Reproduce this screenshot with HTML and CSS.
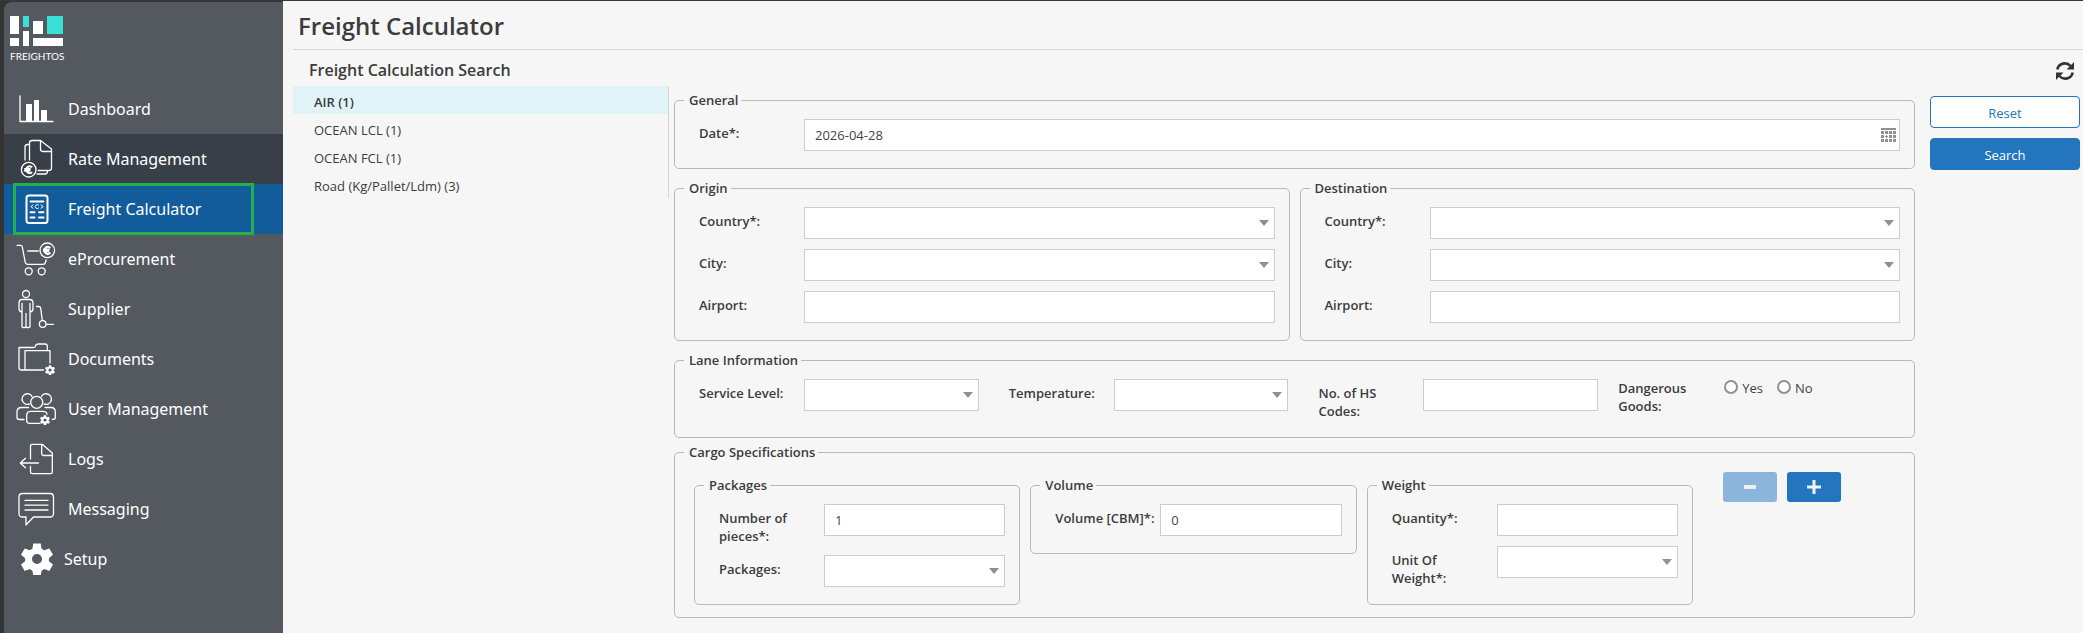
FILE: index.html
```html
<!DOCTYPE html>
<html lang="en">
<head>
    <meta charset="UTF-8">
    <meta name="viewport" content="width=device-width, initial-scale=1.0">
    <title>Freight Calculator</title>
    <link rel="stylesheet" href="styles.css">
</head>
<body>

    <nav class="sidebar">
        <a class="brand" href="#">
            <svg width="54" height="30" viewBox="0 0 54 30">
                <path fill="#fff" d="M0 0h9v18H0zM0 22h9v8H0zM13 15h6v15h-6zM23 5h10v13H23zM23 22h30v8H23z"/>
                <path fill="#3adfd5" d="M13 0h6v11h-6zM37 0h16v18H37z"/>
            </svg>
            <span>FREIGHTOS</span>
        </a>
        <ul class="menu">
            <li><a href="#">
                <svg class="icon" viewBox="0 0 44 44"><path d="M6 9v25.500h33"/><path class="solid" d="M12 17h6v17h-6zM20 13h5v21h-5zM27 23h6v11h-6z"/></svg>
                Dashboard</a></li>
            <li class="open"><a href="#">
                <svg class="icon" viewBox="0 0 44 44">
                    <path d="M15.500 23V6q0-2.500 2.500-2.500h8.500L37.500 12v19q0 2.500-2.500 2.500H24M26.500 3.500V12q0 2.500 2.500 2.500h8"/>
                    <path d="M15 7.500h-1.500q-2.500 0-2.500 2.500v13M23 37h8q2.500 0 2.500-3"/>
                    <circle cx="14.700" cy="32.700" r="7.300"/>
                    <path class="bold" d="M17.500 29.800a3.400 3.400 0 1 0 0 5.800M11 32h5M11 33.700h4.500"/>
                </svg>
                Rate Management</a></li>
            <li class="current"><a href="#">
                <svg class="icon" viewBox="0 0 44 44">
                    <rect class="bold" x="12.500" y="8.500" width="21" height="27.500" rx="2.500"/>
                    <path class="bold" d="M16.500 14.500h13M16.500 25.300h4M25 25.300h4.500M16.500 30.500h4M25 30.500h4.500"/>
                    <path class="thin" d="M19 18l-2.200 1.600 2.200 1.600M27 18l2.200 1.600-2.200 1.600M24.500 18a2 2 0 1 0 0 3.200"/>
                </svg>
                Freight Calculator</a></li>
            <li><a href="#">
                <svg class="icon" viewBox="0 0 44 44">
                    <path d="M3 8.300h3.500q1.500 0 1.800 1.700l2.900 15q.4 2.300 2.500 2.300H29q2 0 2.500-1.800l.6-2.500M13.700 14h10.500"/>
                    <circle cx="33.300" cy="13.300" r="7.300"/><circle cx="14.700" cy="34.300" r="3.500"/><circle cx="27.700" cy="34.300" r="3.500"/>
                    <path class="bold" d="M35.700 10.500a3.400 3.400 0 1 0 0 5.600M29.800 12.600h5M29.800 14.300h4.500"/>
                </svg>
                eProcurement</a></li>
            <li><a href="#">
                <svg class="icon" viewBox="0 0 44 44">
                    <circle cx="12" cy="7" r="3.500"/>
                    <path d="M8 25q-3-.5-3-3v-6q0-3.500 3.500-3.500h7q3.500 0 3.500 3.500v6q0 2.500-3 3M8 16.500V39q0 1.700 2 1.700t2-1.700V26.500V39q0 1.700 2 1.700t2-1.700V16.500"/>
                    <path d="M22.500 19.500h2.300q1.600 0 1.900 1.600l1.600 12.400M32.500 37.300h7"/><circle cx="28.700" cy="37" r="3.300"/>
                </svg>
                Supplier</a></li>
            <li><a href="#">
                <svg class="icon" viewBox="0 0 44 44">
                    <path d="M11 33H7.500Q5 33 5 30.500v-20h14.500q2 0 2-1.500t2.500-2h7q2.300 0 2.300 2.500v4M11 33V13.700h25V26M11 33h18.500"/>
                    <use href="#gear" x="31" y="28" width="10" height="10"/>
                </svg>
                Documents</a></li>
            <li><a href="#">
                <svg class="icon" viewBox="0 0 44 44">
                    <path d="M15.500 16.900A5.300 5.300 0 1 1 18 9.500M27.500 9.500A5.300 5.300 0 1 1 30 16.900"/>
                    <circle cx="22.700" cy="15.300" r="6"/>
                    <path d="M14.500 20.500H7.500Q3 20.500 3 25v5.500q0 2 2.500 2h4.500M31 20.500h6q4.300 0 4.300 4.500v5.500q0 2-3 2M26 36.300H15.500q-2.800 0-2.800-2.500v-5.500q0-4 4-4h12q4 0 4.300 3"/>
                    <use href="#gear" x="26" y="28" width="10" height="10"/>
                </svg>
                User Management</a></li>
            <li><a href="#">
                <svg class="icon" viewBox="0 0 44 44">
                    <path d="M16.500 22V9q0-1.700 1.700-1.700h10L38.300 16v19q0 1.700-1.700 1.700H18.200q-1.700 0-1.700-1.700v-5.500M27.700 7.500v9.300q0 1.700 1.700 1.700h8.800"/>
                    <path d="M24.500 26H6.500M11.500 21.300L6.300 26l5.200 4.700"/>
                </svg>
                Logs</a></li>
            <li><a href="#">
                <svg class="icon" viewBox="0 0 44 44">
                    <path d="M8.500 6.500h27.500q3.500 0 3.500 3.500v16.500q0 3.500-3.500 3.500H19.500L12 38v-8H8.500Q5 30 5 26.500V10q0-3.500 3.500-3.500zM11 13.400h23M11 18.200h23M11 23h23"/>
                </svg>
                Messaging</a></li>
            <li class="setup"><a href="#">
                <svg class="icon" viewBox="0 0 44 44"><use href="#gear" x="7" y="6" width="32" height="32"/></svg>
                Setup</a></li>
        </ul>
        <svg class="defs">
            <symbol id="gear" viewBox="0 0 32 32">
                <path class="solid" fill-rule="evenodd" d="M12.300 0.500h7.400l.9 5.200 2.700 1.600 5-1.900 3.700 6.400-4.100 3.400v3l4.100 3.400-3.700 6.400-5-1.900-2.700 1.600-.9 4.800h-7.400l-.9-4.800-2.700-1.600-5 1.900L0 21.600l4.100-3.400v-3L0 11.800l3.700-6.400 5 1.900 2.700-1.600zM16 11a5 5 0 1 0 0 10 5 5 0 1 0 0-10z"/>
            </symbol>
        </svg>
    </nav>

    <main class="page">
        <header class="page-header">
            <h1>Freight Calculator</h1>
        </header>
        <div class="title-row">
            <h2>Freight Calculation Search</h2>
            <button class="refresh" type="button" aria-label="Refresh">
                <svg width="20" height="20" viewBox="0 0 20 20">
                    <path fill="none" stroke="#333" stroke-width="2.600" d="M2.300 8.500A7.600 7.600 0 0 1 15.500 5M17.700 11.500A7.600 7.600 0 0 1 4.500 15"/>
                    <path fill="#333" d="M19 1v7.500h-7.500l2.500-2.400 2.600-2.600zM1 19v-7.500h7.500L6 13.900l-2.600 2.600z"/>
                </svg>
            </button>
        </div>

        <div class="content">
            <ul class="modes">
                <li><a class="selected" href="#">AIR (1)</a></li>
                <li><a href="#">OCEAN LCL (1)</a></li>
                <li><a href="#">OCEAN FCL (1)</a></li>
                <li><a href="#">Road (Kg/Pallet/Ldm) (3)</a></li>
            </ul>

            <form class="search-form" id="search-form">
                <fieldset>
                    <legend>General</legend>
                    <div class="field">
                        <label for="date">Date*:</label>
                        <div class="control">
                            <input type="text" id="date" value="2026-04-28">
                            <svg class="calendar" width="15" height="14" viewBox="0 0 15 14">
                                <path fill="#8e9096" d="M0 0h15v2H0zM0 3h3v3H0zM4 3h3v3H4zM8 3h3v3H8zM12 3h3v3h-3zM0 7h3v3H0zM5 7h1v1h1v1H6v1H5V9H4V8h1zM8 7h3v3H8zM12 7h3v3h-3zM0 11h3v3H0zM4 11h3v3H4zM8 11h3v3H8zM12 11h3v3h-3z"/>
                            </svg>
                        </div>
                    </div>
                </fieldset>

                <div class="places">
                    <fieldset>
                        <legend>Origin</legend>
                        <div class="field">
                            <label for="origin-country">Country*:</label>
                            <div class="control drop"><select id="origin-country"></select></div>
                        </div>
                        <div class="field">
                            <label for="origin-city">City:</label>
                            <div class="control drop"><select id="origin-city"></select></div>
                        </div>
                        <div class="field">
                            <label for="origin-airport">Airport:</label>
                            <div class="control"><input type="text" id="origin-airport"></div>
                        </div>
                    </fieldset>
                    <fieldset>
                        <legend>Destination</legend>
                        <div class="field">
                            <label for="dest-country">Country*:</label>
                            <div class="control drop"><select id="dest-country"></select></div>
                        </div>
                        <div class="field">
                            <label for="dest-city">City:</label>
                            <div class="control drop"><select id="dest-city"></select></div>
                        </div>
                        <div class="field">
                            <label for="dest-airport">Airport:</label>
                            <div class="control"><input type="text" id="dest-airport"></div>
                        </div>
                    </fieldset>
                </div>

                <fieldset>
                    <legend>Lane Information</legend>
                    <div class="lane">
                        <div class="field">
                            <label for="service">Service Level:</label>
                            <div class="control drop"><select id="service"></select></div>
                        </div>
                        <div class="field">
                            <label for="temperature">Temperature:</label>
                            <div class="control drop"><select id="temperature"></select></div>
                        </div>
                        <div class="field">
                            <label for="hs-codes">No. of HS<br>Codes:</label>
                            <div class="control"><input type="text" id="hs-codes"></div>
                        </div>
                        <div class="dangerous" role="radiogroup" aria-labelledby="dangerous-label">
                            <span class="caption" id="dangerous-label">Dangerous<br>Goods:</span>
                            <label><input type="radio" name="dangerous" value="yes">Yes</label>
                            <label><input type="radio" name="dangerous" value="no">No</label>
                        </div>
                    </div>
                </fieldset>

                <fieldset class="cargo">
                    <legend>Cargo Specifications</legend>
                    <div class="cargo-row">
                        <fieldset>
                            <legend>Packages</legend>
                            <div class="field">
                                <label for="pieces">Number of pieces*:</label>
                                <div class="control"><input type="text" id="pieces" value="1"></div>
                            </div>
                            <div class="field">
                                <label for="packages">Packages:</label>
                                <div class="control drop"><select id="packages"></select></div>
                            </div>
                        </fieldset>
                        <fieldset>
                            <legend>Volume</legend>
                            <div class="field">
                                <label for="volume">Volume [CBM]*:</label>
                                <div class="control"><input type="text" id="volume" value="0"></div>
                            </div>
                        </fieldset>
                        <fieldset>
                            <legend>Weight</legend>
                            <div class="field">
                                <label for="quantity">Quantity*:</label>
                                <div class="control"><input type="text" id="quantity"></div>
                            </div>
                            <div class="field">
                                <label for="unit">Unit Of Weight*:</label>
                                <div class="control drop"><select id="unit"></select></div>
                            </div>
                        </fieldset>
                        <div class="row-buttons">
                            <button type="button" disabled aria-label="Remove row">
                                <svg width="16" height="16" viewBox="0 0 16 16"><rect x="2" y="6" width="12" height="4" rx="1"/></svg>
                            </button>
                            <button type="button" aria-label="Add row">
                                <svg width="16" height="16" viewBox="0 0 16 16"><path d="M6.500 1h3v5.500H15v3H9.500V15h-3V9.500H1v-3h5.500z"/></svg>
                            </button>
                        </div>
                    </div>
                </fieldset>
            </form>

            <div class="actions">
                <button type="reset" form="search-form" class="btn">Reset</button>
                <button type="submit" form="search-form" class="btn primary">Search</button>
            </div>
        </div>
    </main>

</body>
</html>
```

FILE: styles.css
```css
* {
    box-sizing: border-box;
}
body {
    margin: 0;
    min-height: 100vh;
    display: flex;
    background-color: #333;
    border-top: 1px solid #3c3839;
    font-family: "Open Sans", sans-serif;
    font-size: 13px;
    line-height: 18px;
    color: #3c3c3c;
}
ul {
    list-style: none;
    margin: 0;
    padding: 0;
}
a {
    color: inherit;
    text-decoration: none;
}

/* sidebar */
.sidebar {
    flex: 0 0 279px;
    margin: 1px 0 0 4px;
    background-color: #54585f;
    border-top-left-radius: 8px;
    color: #fff;
    font-family: "Noto Sans", sans-serif;
}
.brand {
    display: flex;
    flex-direction: column;
    gap: 1px;
    height: 82px;
    padding: 14px 0 0 6px;
    font-family: Lato, sans-serif;
    font-size: 10px;
}
.menu a {
    display: flex;
    align-items: center;
    gap: 10px;
    height: 50px;
    padding: 0 0 1px 10px;
    font-size: 16px;
}
.menu .open {
    background-color: #383f48;
}
.menu .current {
    background-color: #125c9c;
    position: relative;
}
.menu .current::after {
    content: "";
    position: absolute;
    inset: -1px 29px -1px 9px;
    border: 3px solid #22b14c;
}
.menu .setup a {
    gap: 6px;
}
.icon {
    flex: none;
    width: 44px;
    height: 44px;
    fill: none;
    stroke: #fff;
    stroke-width: 1.300;
    stroke-linecap: round;
    stroke-linejoin: round;
}
.icon .bold {
    stroke-width: 2;
}
.icon .thin {
    stroke-width: 1;
}
.solid {
    fill: #fff;
    stroke: none;
}
.defs {
    display: none;
}

/* page */
.page {
    flex: 1;
    min-width: 0;
    background-color: #f6f6f6;
    padding-left: 10px;
}
.page-header {
    height: 49px;
    padding: 8px 5px;
    border-bottom: 1px solid #d6d6d6;
}
h1 {
    margin: 0;
    font-size: 24px;
    font-weight: 600;
    line-height: 34px;
}
.title-row {
    display: flex;
    justify-content: space-between;
    align-items: center;
    height: 36px;
    padding: 5px 8px 0 16px;
}
h2 {
    margin: 0;
    padding-bottom: 2px;
    font-size: 16px;
    font-weight: 600;
    line-height: 24px;
}
.refresh {
    display: flex;
    padding: 0;
    border: none;
    background: none;
    cursor: pointer;
}
.content {
    display: flex;
    align-items: flex-start;
}
.modes {
    flex: 0 0 376px;
    border-right: 1px solid #d6d6d6;
}
.modes a {
    display: block;
    padding: 7px 21px 3px;
}
.modes .selected {
    background-color: #e0f4f8;
    font-weight: 600;
}

/* form */
.search-form {
    flex: 1;
    min-width: 0;
    display: flex;
    flex-direction: column;
    gap: 10px;
    padding: 5px 15px 15px 5px;
}
fieldset {
    min-width: 0;
    margin: 0;
    padding: 10px 14px 17px 9px;
    border: 1px solid #b9b9b9;
    border-radius: 5px;
}
legend {
    padding: 0 3px 0 5px;
    font-weight: 600;
}
.places {
    display: grid;
    grid-template-columns: 1fr 1fr;
    gap: 10px;
}
.field {
    display: flex;
    align-items: flex-start;
    padding-left: 15px;
}
.field + .field {
    margin-top: 10px;
}
.field label {
    flex: 0 0 105px;
    padding: 5px 15px 0 0;
    font-weight: 600;
}
.control {
    flex: 1;
    min-width: 0;
    position: relative;
}
.control input,
.control select {
    display: block;
    width: 100%;
    height: 32px;
    padding: 0 10px;
    border: 1px solid #ccc;
    border-radius: 0;
    background-color: #fff;
    font: inherit;
    color: #444;
    appearance: none;
}
.drop::after {
    content: "";
    position: absolute;
    right: 6px;
    top: 13px;
    border: 5px solid transparent;
    border-top: 6px solid #8e9096;
    border-bottom: none;
    pointer-events: none;
}
.calendar {
    position: absolute;
    right: 4px;
    top: 9px;
}
.lane {
    display: grid;
    grid-template-columns: 310fr 310fr 300fr 297fr;
}
.lane .field {
    margin: 0;
    padding-right: 15px;
}
.lane .field:nth-child(3) {
    padding-right: 5px;
}
.dangerous {
    display: flex;
    align-items: flex-start;
    gap: 14px;
    padding-left: 15px;
    color: #444;
}
.dangerous .caption {
    flex: 0 0 92px;
    font-weight: 600;
    color: #3c3c3c;
}
.dangerous label {
    display: flex;
    gap: 4px;
}
.dangerous input {
    appearance: none;
    width: 14px;
    height: 14px;
    margin: 1px 0 0;
    border: 2px solid #8e9096;
    border-radius: 50%;
    background-color: #fff;
}
.cargo {
    margin-top: -5px;
    padding-bottom: 12px;
}
.cargo-row {
    display: grid;
    grid-template-columns: 1fr 1fr 1fr 197px;
    gap: 10px;
    align-items: start;
    padding-left: 10px;
}
.cargo-row > fieldset {
    margin-top: 5px;
}
.cargo-row .field label {
    padding-right: 0;
}
.cargo-row fieldset:not(:nth-child(2)) label {
    padding-right: 25px;
}
.row-buttons {
    display: flex;
    gap: 10px;
    padding: 1px 0 0 20px;
}
.row-buttons button {
    display: flex;
    justify-content: center;
    align-items: center;
    width: 54px;
    height: 30px;
    padding: 0;
    border: none;
    border-radius: 3px;
    background-color: #2375be;
    fill: #f1f1f1;
    cursor: pointer;
}
.row-buttons button:disabled {
    background-color: #8bb5db;
}
.actions {
    flex: 0 0 153px;
    display: flex;
    flex-direction: column;
    gap: 10px;
    padding: 10px 3px 0 0;
}
.btn {
    height: 32px;
    padding: 2px 0 0;
    border: 1px solid #2375be;
    border-radius: 4px;
    background-color: #fff;
    font: inherit;
    color: #2375be;
    cursor: pointer;
}
.btn.primary {
    background-color: #2375be;
    color: #fff;
}
```
